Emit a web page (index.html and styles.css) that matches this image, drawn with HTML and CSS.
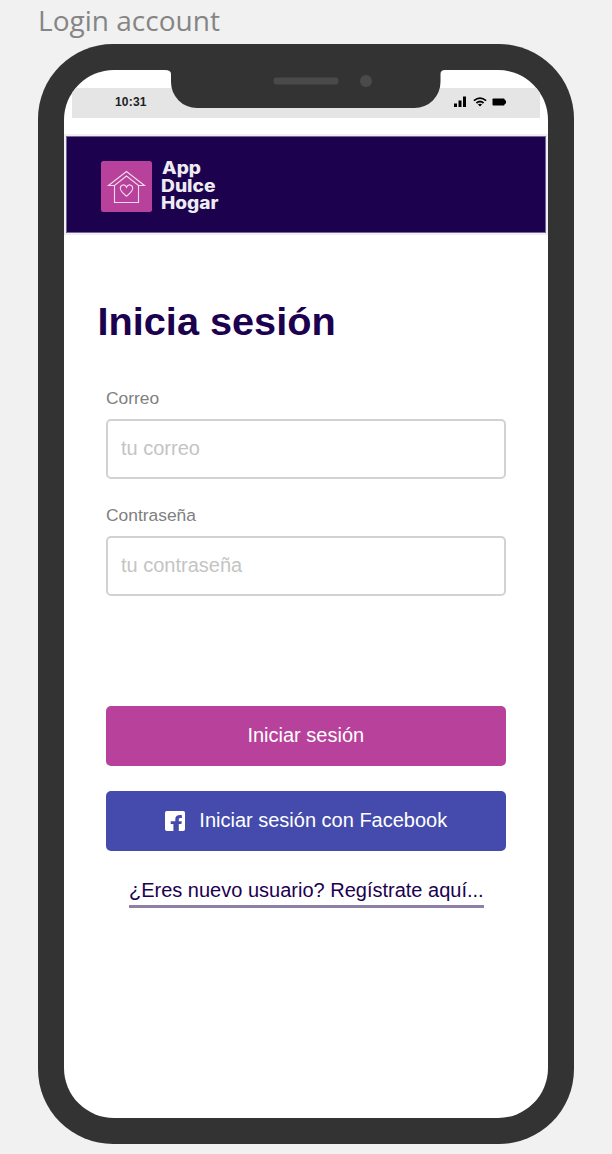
FILE: index.html
```html
<!DOCTYPE html>
<html lang="es">
<head>
<meta charset="utf-8">
<title>Login account</title>
<link rel="stylesheet" href="styles.css">
</head>
<body>
<div class="frame-title"><svg width="200" height="40"><text x="0" y="30.500" textLength="182" lengthAdjust="spacingAndGlyphs">Login account</text></svg></div>
<div class="phone">
  <main class="screen">
    <div class="status">
      <span class="time">10:31</span>
      <svg class="status-icons" width="54" height="14" viewBox="0 0 54 14">
        <path d="M0 8.500h3v3.500H0zM4.500 5.500h3v6.500h-3zM9 1.500h3v10.500H9z"/>
        <g fill="none" stroke="#000" stroke-width="1.700"><path d="M19.900 5.600Q26 .6 32.100 5.600M22.400 8Q26 5 29.600 8"/></g>
        <path d="M23.900 9.500Q26 7.900 28.100 9.500L26 11.500z"/>
        <rect x="38.500" y="3.500" width="12" height="7" rx=".8"/><path d="M50 4.500l2 1.300v2.400l-2 1.300z"/>
      </svg>
    </div>
    <header class="header">
      <svg class="logo" width="51" height="51" viewBox="0 0 51 51">
        <rect width="51" height="51" rx="2.500" fill="#b8429b"/>
        <g fill="none" stroke="#f0dcec" stroke-width="1.100" stroke-linejoin="miter">
          <path d="M13.500 24.500H7.500L25.500 10.500l18 14h-6L25.500 15z"/>
          <path d="M13.500 24.500v17h24v-17"/>
          <path d="M25.500 35.200C22.500 32.700 19.300 30.400 19.300 27.300C19.300 23.500 24.100 22.600 25.500 26.200C26.900 22.600 31.700 23.500 31.700 27.300C31.700 30.400 28.500 32.700 25.500 35.200z"/>
        </g>
      </svg>
      <svg class="brand" width="70" height="62">
        <text x="1" y="17" textLength="39" lengthAdjust="spacingAndGlyphs">App</text>
        <text x="0" y="34.500" textLength="54.500" lengthAdjust="spacingAndGlyphs">Dulce</text>
        <text x="0" y="52" textLength="57.500" lengthAdjust="spacingAndGlyphs">Hogar</text>
      </svg>
    </header>
    <h1 class="heading">Inicia sesión</h1>
    <form class="form">
      <label class="label" for="mail">Correo</label>
      <input class="input" id="mail" type="email" placeholder="tu correo">
      <label class="label" for="pass">Contraseña</label>
      <input class="input" id="pass" type="password" placeholder="tu contraseña">
      <button class="button primary" type="button">Iniciar sesión</button>
      <button class="button facebook" type="button">
        <svg class="facebook-icon" width="20" height="20" viewBox="0 0 20 20"><path fill="#fff" d="M1.800 0h16.400A1.800 1.800 0 0 1 20 1.800v16.400a1.800 1.800 0 0 1-1.800 1.800h-4.400v-7h2.600l.4-2.800h-3V8.600c0-1 .5-1.700 1.700-1.700h1.400V4.300c-4-.7-6.600.6-6.600 4v1.900H5.700V13h2.700v7H1.800A1.800 1.800 0 0 1 0 18.200V1.800A1.800 1.800 0 0 1 1.800 0z"/></svg>
        <span>Iniciar sesión con Facebook</span>
      </button>
      <a class="register">¿Eres nuevo usuario? Regístrate aquí...</a>
    </form>
  </main>
  <svg class="notch" width="280" height="40" viewBox="0 0 280 40">
    <path fill="#333" d="M0 0H280V1Q275.500 1 275.500 5V13A26 26 0 0 1 249.500 39H32A26 26 0 0 1 6 13V5Q6 1 0 1z"/>
    <rect x="108.500" y="8.500" width="65" height="7" rx="3" fill="#4a4a4a"/>
    <circle cx="201" cy="12" r="6" fill="#4a4a4a"/>
  </svg>
</div>
</body>
</html>
```
FILE: styles.css
```css
* { box-sizing: border-box; }
body {
  margin: 0;
  height: 1154px;
  padding-left: 38.4px;
  background: #f1f1f1;
  font-family: "Liberation Sans", Arial, sans-serif;
  overflow: hidden;
}
.frame-title { height: 43.500px; }
.frame-title svg { display: block; }
.frame-title text { font: 28px "Open Sans", sans-serif; fill: #858585; }
.phone {
  position: relative;
  width: 535.300px;
  height: 1100px;
  padding: 26px 25.600px;
  border-radius: 75px;
  background: #333;
}
.screen {
  height: 1048px;
  padding-top: 18px;
  border-radius: 50px;
  background: #fff;
  overflow: hidden;
}
.notch { position: absolute; left: 126.600px; top: 25.500px; }
.status {
  display: flex;
  justify-content: space-between;
  align-items: center;
  height: 30px;
  margin: 0 8px;
  padding: 0 32px 1px 43px;
  background: #e5e5e5;
}
.time { font-size: 12px; font-weight: bold; color: #222; letter-spacing: .2px; }
.header {
  display: flex;
  height: 101px;
  margin: 16.400px 0 0;
  padding: 25.500px 0 0 35px;
  border: 2px solid #f0f0f2;
  background: #1c014f;
  box-shadow: inset 0 0 0 1px #776699;
}
.brand { margin-left: 9.500px; margin-top: -4px; }
.brand text { font: 800 17px Inter, sans-serif; fill: #ececf0; }
.heading {
  margin: 63.500px 0 0 33.500px;
  font-size: 39.700px;
  line-height: 46px;
  color: #1c014f;
}
.form {
  display: flex;
  flex-direction: column;
  margin: 43.600px 42.500px 0 42px;
}
.label { height: 31px; font-size: 17.400px; line-height: 20px; color: #808080; }
.input {
  height: 60px;
  margin-bottom: 26px;
  padding: 0 13px;
  border: 2.500px solid #d2d2d2;
  border-radius: 5px;
  font: 20px "Liberation Sans", Arial, sans-serif;
}
.input::placeholder { color: #c4c4c4; opacity: 1; }
.button {
  display: flex;
  justify-content: center;
  align-items: center;
  gap: 14px;
  height: 60px;
  padding: 0 0 2px;
  border: 0;
  border-radius: 5px;
  font: 20px "Liberation Sans", Arial, sans-serif;
  color: #fff;
}
.primary { margin-top: 84.500px; background: #b8429b; }
.facebook { margin-top: 25px; padding-left: 1px; background: #444bac; }
.facebook-icon { margin-top: 2px; }
.register {
  align-self: center;
  height: 32px;
  margin: 25px 0 0 1px;
  border-bottom: 3px solid #8e80a7;
  font-size: 20px;
  line-height: 29px;
  color: #1c014f;
  white-space: nowrap;
}
```
